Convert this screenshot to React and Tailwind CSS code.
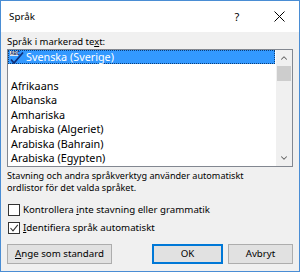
import { ChevronUp, ChevronDown } from 'lucide-react';

function SpellIcon() {
  return (
    <svg width="14" height="13" viewBox="0 0 14 13" className="shrink-0">
      <rect x="0" y="0" width="8" height="5" fill="#dbe8f7" />
      <text x="0.3" y="4.3" fontSize="4.5" fontFamily="Liberation Sans, sans-serif" fontWeight="bold" fill="#1a2a5a">ABC</text>
      <path d="M1 8.5 L4 12 L13 1.5" stroke="#10307a" strokeWidth="1.8" fill="none" />
    </svg>
  );
}

export default function App() {
  const languages = [
    '',
    'Afrikaans',
    'Albanska',
    'Amhariska',
    'Arabiska (Algeriet)',
    'Arabiska (Bahrain)',
    'Arabiska (Egypten)',
  ];

  return (
    <div className="w-[300px] h-[272px] border border-[#4a8dd4] bg-[#f0f0f0] flex flex-col text-[9.5px] text-black leading-[14px] overflow-hidden" style={{ fontFamily: '"Noto Sans", sans-serif' }}>
      {/* title bar */}
      <div className="h-[31px] bg-white flex items-center pl-2 shrink-0">
        <span className="text-[9.8px] flex-1">Språk</span>
        <span className="text-[11px] w-[20px] text-center mr-[27px]">?</span>
        <svg width="11" height="11" viewBox="0 0 11 11" className="mr-[14px]">
          <path d="M0.5 0.5 L10.5 10.5 M10.5 0.5 L0.5 10.5" stroke="#000" strokeWidth="1" />
        </svg>
      </div>

      <div className="flex flex-col px-[6px] pt-[3px]">
        <div className="h-[14px]">Språk i markerad te<u>x</u>t:</div>

        {/* listbox */}
        <div className="h-[118px] border border-[#828790] bg-white flex text-[10.8px]">
          <div className="flex-1 flex flex-col">
            <div className="h-[14px] flex items-center gap-[2px] pl-[1px] bg-[#3399ff] text-white border border-dotted border-[#0b3d78] mr-[1px]">
              <SpellIcon />
              <span>Svenska (Sverige)</span>
            </div>
            {languages.map((name, i) => (
              <div key={i} className="h-[14.5px] flex items-center pl-[3px]">{name}</div>
            ))}
          </div>
          <div className="w-[16px] bg-[#f0f0f0] flex flex-col items-center">
            <div className="h-[16px] flex items-center justify-center">
              <ChevronUp size={10} strokeWidth={2.5} color="#606060" />
            </div>
            <div className="w-[14px] h-[15px] bg-[#cdcdcd]" />
            <div className="flex-1" />
            <div className="h-[16px] flex items-center justify-center">
              <ChevronDown size={10} strokeWidth={2.5} color="#606060" />
            </div>
          </div>
        </div>

        <div className="mt-[3px] leading-[12px] whitespace-nowrap text-[9.1px]">
          Stavning och andra språkverktyg använder automatiskt<br />ordlistor för det valda språket.
        </div>

        <div className="mt-[9px] flex flex-col gap-[4px] text-[9.7px]">
          <div className="h-[14px] flex items-center gap-[3px] pl-[1px]">
            <div className="w-[12px] h-[12px] border border-[#333] bg-white" />
            <span>Kontrollera <u>i</u>nte stavning eller grammatik</span>
          </div>
          <div className="h-[14px] flex items-center gap-[3px] pl-[1px]">
            <div className="w-[12px] h-[12px] border border-[#333] bg-white flex items-center justify-center">
              <svg width="10" height="10" viewBox="0 0 10 10">
                <path d="M1.5 5 L4 7.8 L8.8 1.8" stroke="#333" strokeWidth="1.1" fill="none" />
              </svg>
            </div>
            <span><u>I</u>dentifiera språk automatiskt</span>
          </div>
        </div>

        <div className="mt-[9px] flex items-center text-[9.7px]">
          <button className="h-[20px] w-[105px] border border-[#adadad] bg-[#e1e1e1]"><u>A</u>nge som standard</button>
          <div className="flex-1" />
          <button className="h-[20px] w-[71px] border-2 border-[#0078d7] bg-[#e1e1e1]">OK</button>
          <button className="h-[20px] w-[65px] ml-[5px] border border-[#adadad] bg-[#e1e1e1]">Avbryt</button>
        </div>
      </div>
    </div>
  );
}
